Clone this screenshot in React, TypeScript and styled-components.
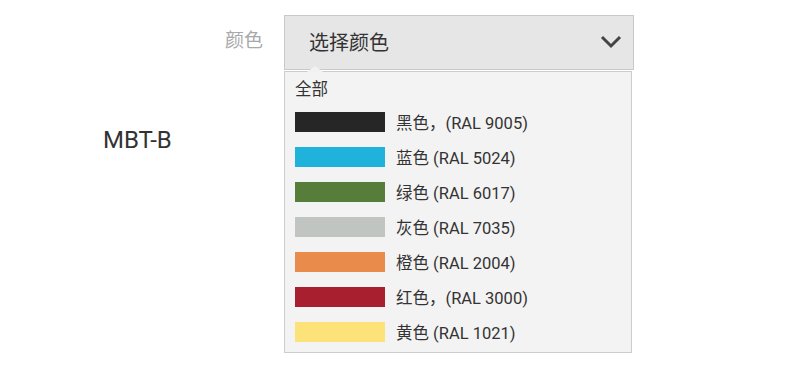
import React from "react";
import styled, { createGlobalStyle } from "styled-components";

const colors = [
  { name: "黑色，(RAL 9005)", hex: "#262626" },
  { name: "蓝色 (RAL 5024)", hex: "#1fb3dc" },
  { name: "绿色 (RAL 6017)", hex: "#567e3a" },
  { name: "灰色 (RAL 7035)", hex: "#c1c5c2" },
  { name: "橙色 (RAL 2004)", hex: "#e98b4a" },
  { name: "红色，(RAL 3000)", hex: "#a81f2f" },
  { name: "黄色 (RAL 1021)", hex: "#fde27a" },
];

const App: React.FC = () => {
  return (
    <>
      <GlobalStyle />
      <Page>
        <NameColumn>
          <Name>MBT-B</Name>
        </NameColumn>
        <Label>颜色</Label>
        <Field>
          <Select>
            <SelectText>选择颜色</SelectText>
            <svg width="22" height="14" viewBox="0 0 22 14">
              <polyline
                points="2,2 11,11 20,2"
                fill="none"
                stroke="#444"
                strokeWidth="3"
              />
            </svg>
          </Select>
          <Dropdown>
            <Option $first>全部</Option>
            {colors.map((c) => (
              <Option key={c.name}>
                <Swatch $color={c.hex} />
                {c.name}
              </Option>
            ))}
          </Dropdown>
        </Field>
      </Page>
    </>
  );
};

const GlobalStyle = createGlobalStyle`
  body {
    margin: 0;
    background: #ffffff;
    font-family: Roboto, "Noto Sans CJK SC", sans-serif;
    color: #333;
  }
`;

const Page = styled.div`
  display: flex;
  align-items: flex-start;
  padding-top: 15px;
`;

const NameColumn = styled.div`
  width: 110px;
  padding-left: 103px;
`;

const Name = styled.div`
  margin-top: 110px;
  font-size: 24px;
  line-height: 30px;
  color: #333;
`;

const Label = styled.div`
  width: 50px;
  padding-right: 21px;
  text-align: right;
  font-size: 19px;
  line-height: 52px;
  color: #a8a8a8;
`;

const Field = styled.div`
  width: 350px;
`;

const Select = styled.div`
  display: flex;
  align-items: center;
  justify-content: space-between;
  box-sizing: border-box;
  height: 55px;
  padding: 0 11px 2px 24px;
  background: #e6e6e6;
  border: 1px solid #c9c9c9;
`;

const SelectText = styled.span`
  font-size: 20px;
  color: #333;
`;

const Dropdown = styled.div`
  position: relative;
  width: 348px;
  box-sizing: border-box;
  margin-top: 1px;
  padding-bottom: 3px;
  background: #f3f3f3;
  border: 1px solid #cdcdcd;

  &::before {
    content: "";
    position: absolute;
    top: -6px;
    left: 22px;
    width: 0;
    height: 0;
    border-left: 8px solid transparent;
    border-right: 8px solid transparent;
    border-bottom: 6px solid #f1f1f1;
  }
`;

const Option = styled.div<{ $first?: boolean }>`
  display: flex;
  align-items: center;
  gap: 11px;
  height: ${(p) => (p.$first ? "32px" : "35px")};
  padding-left: 10px;
  font-size: 16.5px;
  color: #333;
`;

const Swatch = styled.span<{ $color: string }>`
  width: 90px;
  height: 20px;
  background: ${(p) => p.$color};
`;

export default App;
